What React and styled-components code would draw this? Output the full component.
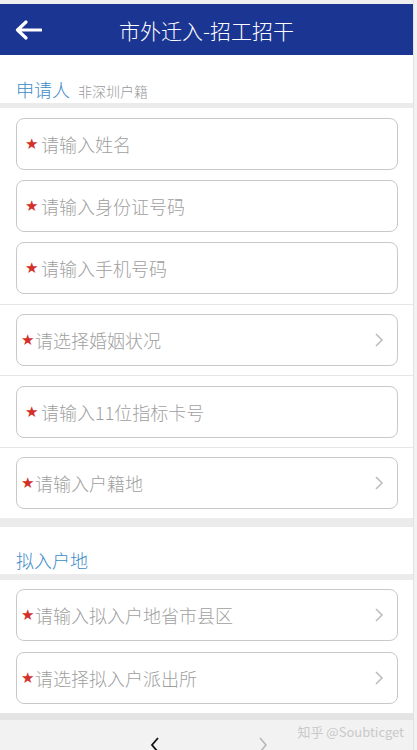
import React from "react"
import styled, { createGlobalStyle } from 'styled-components'

const Global = createGlobalStyle`
  body {
    margin: 0;
    background: #f2f2f2;
    font-family: "Noto Sans CJK SC", "Noto Sans", sans-serif;
  }
`

const Screen = styled.div`
  width: 413px;
  border-right: 1px solid #e2e2e2;
  background: #fff;
  display: flex;
  flex-direction: column;
`

const TopStrip = styled.div`
  height: 4px;
  background: #efefef;
`

const Header = styled.header`
  height: 51px;
  background: #1b3593;
  display: flex;
  align-items: center;
  justify-content: center;
  position: relative;
  color: #fff;
  font-size: 21px;
  font-weight: 300;
`

const Back = styled.span`
  position: absolute;
  left: 15px;
  top: 16px;
  display: flex;
`

const SectionTitle = styled.div`
  height: ${p => p.$h}px;
  box-sizing: border-box;
  display: flex;
  align-items: flex-end;
  padding: 0 16px ${p => p.$pb}px;
  gap: 8px;
  color: #3b8bc9;
  font-size: 18px;
  font-weight: 300;
  line-height: 1;
  small {
    font-size: 14px;
    color: #999;
  }
`

const Band = styled.div`
  height: ${p => p.$h}px;
  background: ${p => p.$c || '#ebebeb'};
`

const Group = styled.div`
  display: flex;
  flex-direction: column;
  gap: ${p => p.$gap}px;
  padding: ${p => p.$pt}px 15px ${p => p.$pb}px 16px;
  border-top: ${p => (p.$line ? '1px solid #e6e6e6' : 'none')};
`

const Field = styled.div`
  height: 52px;
  box-sizing: border-box;
  border: 1px solid #c9c9c9;
  border-radius: 8px;
  display: flex;
  align-items: center;
  padding: 0 13px 0 ${p => (p.$select ? 4 : 8)}px;
  gap: ${p => (p.$select ? 3 : 5)}px;
  font-size: 18px;
  font-weight: 300;
  color: #9f9f9f;
`

const Star = styled.span`
  color: #d3302b;
  font-size: 15px;
  line-height: 1;
  width: 11px;
  font-family: "DejaVu Sans", sans-serif;
`

const Label = styled.span`
  flex: 1;
`

const Toolbar = styled.div`
  height: 30px;
  background: #f2f2f2;
  position: relative;
  display: flex;
  align-items: flex-end;
  gap: 96px;
  padding-left: 149px;
  overflow: hidden;
`

const Nav = styled.span`
  display: flex;
  margin-bottom: -4px;
`

const Watermark = styled.span`
  position: absolute;
  right: 9px;
  top: 2px;
  font-size: 13px;
  color: #c9c9c9;
  font-family: "Noto Sans CJK SC", "DejaVu Sans", sans-serif;
`

function Chevron() {
  return (
    <svg width="10" height="16" viewBox="0 0 10 16">
      <path d="M2 2 L8 8 L2 14" fill="none" stroke="#bdbdbd" strokeWidth="1.6" />
    </svg>
  )
}

function Row({ label, select }) {
  return (
    <Field $select={select}>
      <Star>★</Star>
      <Label>{label}</Label>
      {select && <Chevron />}
    </Field>
  )
}

export default function App() {
  return (
    <>
      <Global />
      <Screen>
        <TopStrip />
        <Header>
          <Back>
            <svg width="27" height="20" viewBox="0 0 27 20">
              <path d="M26 10 H3 M11 2 L2.5 10 L11 18" fill="none" stroke="#fff" strokeWidth="3.2" strokeLinecap="round" strokeLinejoin="round" />
            </svg>
          </Back>
          市外迁入-招工招干
        </Header>
        <SectionTitle $h={48} $pb={5}>
          申请人 <small>非深圳户籍</small>
        </SectionTitle>
        <Band $h={5} />
        <Group $gap={10} $pt={10} $pb={10}>
          <Row label="请输入姓名" />
          <Row label="请输入身份证号码" />
          <Row label="请输入手机号码" />
        </Group>
        <Group $line $gap={0} $pt={9} $pb={9}>
          <Row label="请选择婚姻状况" select />
        </Group>
        <Group $line $gap={0} $pt={10} $pb={9}>
          <Row label="请输入11位指标卡号" />
        </Group>
        <Group $line $gap={0} $pt={9} $pb={9}>
          <Row label="请输入户籍地" select />
        </Group>
        <Band $h={9} />
        <SectionTitle $h={47} $pb={5}>拟入户地</SectionTitle>
        <Band $h={6} />
        <Group $gap={11} $pt={9} $pb={9}>
          <Row label="请输入拟入户地省市县区" select />
          <Row label="请选择拟入户派出所" select />
        </Group>
        <Band $h={7} $c="#e4e4e4" />
        <Toolbar>
          <Nav>
            <svg width="12" height="18" viewBox="0 0 12 18">
              <path d="M9 2 L3 9 L9 16" fill="none" stroke="#111" strokeWidth="1.8" />
            </svg>
          </Nav>
          <Nav>
            <svg width="12" height="18" viewBox="0 0 12 18">
              <path d="M3 2 L9 9 L3 16" fill="none" stroke="#b5b5b5" strokeWidth="1.5" />
            </svg>
          </Nav>
          <Watermark>知乎 @Soubticget</Watermark>
        </Toolbar>
      </Screen>
    </>
  )
}
